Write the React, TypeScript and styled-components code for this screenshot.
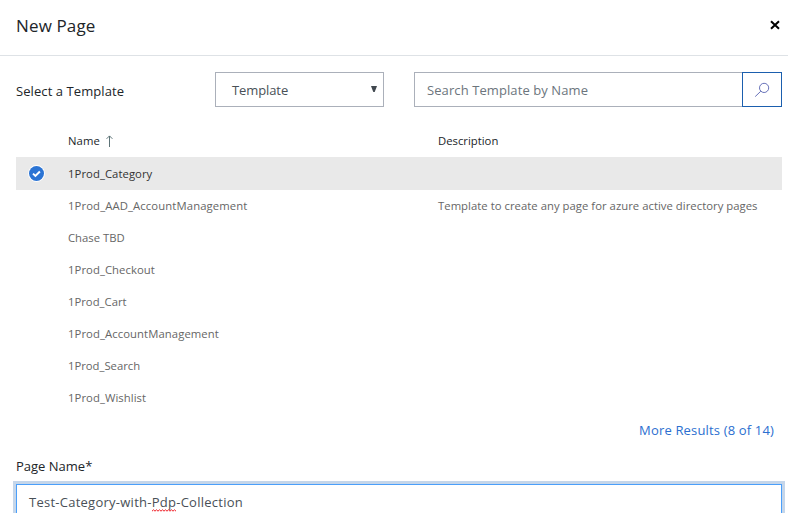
import React from "react";
import styled, { createGlobalStyle } from "styled-components";

const GlobalStyle = createGlobalStyle`
  *, *::before, *::after { box-sizing: border-box; }
  html, body { margin: 0; height: 100%; overflow: hidden; background: #fff; }
  body { font-family: "Open Sans", "Noto Sans", sans-serif; font-size: 13px; color: #212529; }
  button, input { font: inherit; margin: 0; }
`;

const Dialog = styled.div`
  width: 788px;
  height: 513px;
  overflow: hidden;
  display: flex;
  flex-direction: column;
`;

const Header = styled.header`
  display: flex;
  flex: none;
  justify-content: space-between;
  height: 56px;
  padding: 13px 8px 0 16px;
  border-bottom: 1px solid #dee2e6;
`;

const Title = styled.h1`
  margin: 0;
  font-size: 17px;
  font-weight: 400;
  line-height: 26px;
  letter-spacing: 0.14px;
`;

const CloseButton = styled.button`
  display: flex;
  align-items: center;
  justify-content: center;
  width: 10px;
  height: 23px;
  padding: 0;
  border: 0;
  background: none;
`;

const Body = styled.main`
  display: flex;
  flex-direction: column;
  padding: 16px 6px 0 16px;
`;

const Toolbar = styled.div`
  display: grid;
  grid-template-columns: 199px 169px 30px 1fr;
  align-items: center;
  height: 35px;
`;

const Label = styled.label`
  line-height: 20px;
  letter-spacing: 0.08px;
  padding-top: 2px;
`;

const Select = styled.div`
  display: flex;
  align-items: center;
  justify-content: space-between;
  height: 35px;
  padding: 0 6px 0 16px;
  border: 1px solid #abb0ba;
  color: #495057;
  letter-spacing: -0.1px;

  svg { margin-top: -1px; }
`;

const SearchGroup = styled.div`
  grid-column: 4;
  display: flex;
  height: 35px;
`;

const SearchInput = styled.input`
  flex: 1;
  min-width: 0;
  padding: 0 12px;
  border: 1px solid #abb0ba;
  border-right: 0;
  border-radius: 0;
  outline: 0;
  letter-spacing: 0.09px;

  &::placeholder { color: #6c757d; opacity: 1; }
`;

const SearchButton = styled.button`
  display: flex;
  align-items: center;
  justify-content: center;
  width: 40px;
  padding: 0;
  border: 1px solid #1b5fae;
  background: #fff;
`;

const Table = styled.div`
  display: flex;
  flex-direction: column;
  margin-top: 17px;
  font-size: 11.3px;
  letter-spacing: 0.06px;
`;

const Row = styled.div<{ $kind?: "head" | "selected" }>`
  display: grid;
  grid-template-columns: 52px 370px 1fr;
  align-items: center;
  height: ${(p) => (p.$kind ? 33 : 32)}px;
  padding-bottom: ${(p) => (p.$kind ? 0 : 2)}px;
  color: ${(p) => (p.$kind === "head" ? "#212529" : p.$kind === "selected" ? "#333" : "#666")};
  background: ${(p) => (p.$kind === "selected" ? "#e9e9e9" : "transparent")};
`;

const Mark = styled.div`
  display: flex;
  padding-left: 11.5px;
`;

const Cell = styled.div<{ $tracking?: number }>`
  display: flex;
  align-items: center;
  gap: 6px;
  white-space: nowrap;
  letter-spacing: ${(p) => p.$tracking ?? 0.06}px;
`;

const MoreLink = styled.a`
  align-self: flex-end;
  margin: 6px 8px 0 0;
  line-height: 20px;
  color: #2b6fd0;
  letter-spacing: 0.16px;
`;

const FieldLabel = styled.label`
  margin-top: 16px;
  line-height: 20px;
`;

const NameField = styled.div`
  height: 40px;
  margin-top: 8px;
  padding: 7px 12px;
  border: 1px solid #4a9ffa;
  box-shadow: 0 0 0 3px #c5d6ea;
  color: #495057;
  line-height: 20px;
  letter-spacing: 0.255px;
`;

const Misspelled = styled.span`
  position: relative;

  svg {
    position: absolute;
    left: 0;
    bottom: -1px;
  }
`;

const CloseIcon = () => (
  <svg width="10" height="10" viewBox="0 0 10 10" fill="none" stroke="#000" strokeWidth="2">
    <path d="M1 1.2 9 8.8M9 1.2 1 8.8" />
  </svg>
);

const CaretIcon = () => (
  <svg width="6" height="6" viewBox="0 0 6 6" fill="#41484f">
    <path d="M0 0h6L3.7 6H2.3z" />
  </svg>
);

const SearchIcon = () => (
  <svg width="16" height="16" viewBox="0 0 16 16" fill="none" stroke="#6670b8" strokeWidth="1">
    <circle cx="10.1" cy="5.9" r="4.6" />
    <path d="M6.8 9.2 1.2 14.6" />
  </svg>
);

const SortIcon = () => (
  <svg width="7" height="12" viewBox="0 0 7 12" fill="none" stroke="#5d7377">
    <path d="M3.5 12V1M.6 3.8 3.5.9l2.9 2.9" />
  </svg>
);

const CheckIcon = () => (
  <svg width="17" height="17" viewBox="0 0 17 17" fill="none">
    <circle cx="8.5" cy="8.5" r="8.4" fill="#fff" />
    <circle cx="8.5" cy="8.5" r="7.5" fill="#2b74d4" />
    <path d="m5 8.6 2.4 2.3 4.5-4.4" stroke="#fff" strokeWidth="2" />
  </svg>
);

const Squiggle = () => (
  <svg width="24" height="3" viewBox="0 0 24 3" fill="none" stroke="#ee1c25">
    <path d="M0 2.2 1.5.8 3 2.2 4.5.8 6 2.2 7.5.8 9 2.2 10.5.8 12 2.2 13.5.8 15 2.2 16.5.8 18 2.2 19.5.8 21 2.2 22.5.8 24 2.2" />
  </svg>
);

interface Template {
  name: string;
  tracking?: number;
  description?: string;
}

const templates: Template[] = [
  { name: "1Prod_Category" },
  {
    name: "1Prod_AAD_AccountManagement",
    tracking: 0.11,
    description: "Template to create any page for azure active directory pages",
  },
  { name: "Chase TBD", tracking: 0 },
  { name: "1Prod_Checkout" },
  { name: "1Prod_Cart", tracking: 0 },
  { name: "1Prod_AccountManagement", tracking: 0.08 },
  { name: "1Prod_Search", tracking: -0.02 },
  { name: "1Prod_Wishlist" },
];

export default function App() {
  return (
    <Dialog>
      <GlobalStyle />
      <Header>
        <Title>New Page</Title>
        <CloseButton aria-label="Close"><CloseIcon /></CloseButton>
      </Header>
      <Body>
        <Toolbar>
          <Label>Select a Template</Label>
          <Select>Template<CaretIcon /></Select>
          <SearchGroup>
            <SearchInput placeholder="Search Template by Name" />
            <SearchButton aria-label="Search"><SearchIcon /></SearchButton>
          </SearchGroup>
        </Toolbar>
        <Table>
          <Row $kind="head">
            <Mark />
            <Cell>Name<SortIcon /></Cell>
            <Cell $tracking={0}>Description</Cell>
          </Row>
          {templates.map((t, i) => (
            <Row key={t.name} $kind={i === 0 ? "selected" : undefined}>
              <Mark>{i === 0 && <CheckIcon />}</Mark>
              <Cell $tracking={t.tracking}>{t.name}</Cell>
              <Cell $tracking={0.03}>{t.description}</Cell>
            </Row>
          ))}
        </Table>
        <MoreLink>More Results (8 of 14)</MoreLink>
        <FieldLabel>Page Name*</FieldLabel>
        <NameField>
          Test-Category-with-<Misspelled>Pdp<Squiggle /></Misspelled>-Collection
        </NameField>
      </Body>
    </Dialog>
  );
}
